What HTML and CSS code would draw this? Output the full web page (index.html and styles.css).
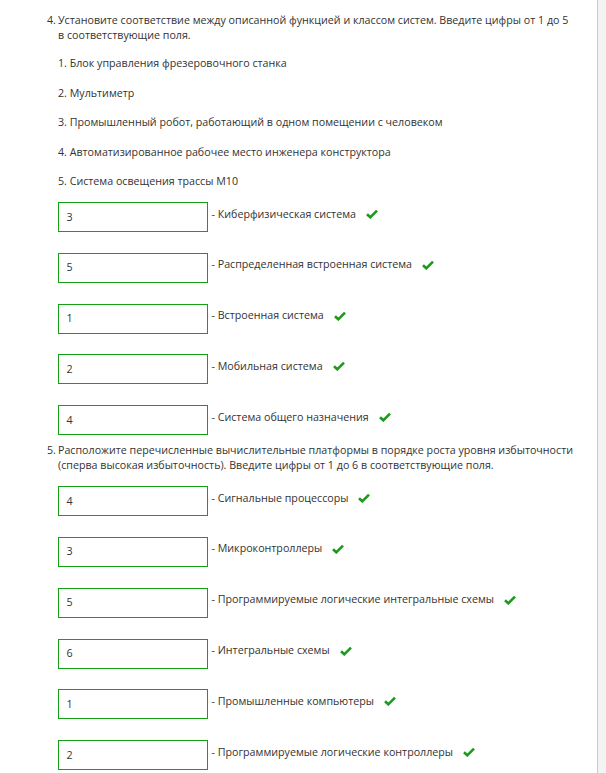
FILE: index.html
```html
<!DOCTYPE html>
<html lang="ru">
<head>
<meta charset="utf-8">
<link rel="stylesheet" href="styles.css">
</head>
<body>
<div class="page">
  <section class="q q4">
    <div class="q-title"><span class="num">4.</span><span class="txt">Установите соответствие между описанной функцией и классом систем. Введите цифры от 1 до 5 в соответствующие поля.</span></div>
    <div class="items">
      <p>1. Блок управления фрезеровочного станка</p>
      <p>2. Мультиметр</p>
      <p>3. Промышленный робот, работающий в одном помещении с человеком</p>
      <p>4. Автоматизированное рабочее место инженера конструктора</p>
      <p>5. Система освещения трассы М10</p>
    </div>
    <div class="rows">
      <div class="row"><div class="box">3</div><span class="label">- Киберфизическая система</span><svg class="ok" viewBox="0 0 12 10"><path d="M1 5.2 L4.3 8.3 L11 1.6" /></svg></div>
      <div class="row"><div class="box">5</div><span class="label">- Распределенная встроенная система</span><svg class="ok" viewBox="0 0 12 10"><path d="M1 5.2 L4.3 8.3 L11 1.6" /></svg></div>
      <div class="row"><div class="box">1</div><span class="label">- Встроенная система</span><svg class="ok" viewBox="0 0 12 10"><path d="M1 5.2 L4.3 8.3 L11 1.6" /></svg></div>
      <div class="row"><div class="box">2</div><span class="label">- Мобильная система</span><svg class="ok" viewBox="0 0 12 10"><path d="M1 5.2 L4.3 8.3 L11 1.6" /></svg></div>
      <div class="row"><div class="box">4</div><span class="label">- Система общего назначения</span><svg class="ok" viewBox="0 0 12 10"><path d="M1 5.2 L4.3 8.3 L11 1.6" /></svg></div>
    </div>
  </section>
  <section class="q q5">
    <div class="q-title"><span class="num">5.</span><span class="txt">Расположите перечисленные вычислительные платформы в порядке роста уровня избыточности (сперва высокая избыточность). Введите цифры от 1 до 6 в соответствующие поля.</span></div>
    <div class="rows">
      <div class="row"><div class="box">4</div><span class="label">- Сигнальные процессоры</span><svg class="ok" viewBox="0 0 12 10"><path d="M1 5.2 L4.3 8.3 L11 1.6" /></svg></div>
      <div class="row"><div class="box">3</div><span class="label">- Микроконтроллеры</span><svg class="ok" viewBox="0 0 12 10"><path d="M1 5.2 L4.3 8.3 L11 1.6" /></svg></div>
      <div class="row"><div class="box">5</div><span class="label">- Программируемые логические интегральные схемы</span><svg class="ok" viewBox="0 0 12 10"><path d="M1 5.2 L4.3 8.3 L11 1.6" /></svg></div>
      <div class="row"><div class="box">6</div><span class="label">- Интегральные схемы</span><svg class="ok" viewBox="0 0 12 10"><path d="M1 5.2 L4.3 8.3 L11 1.6" /></svg></div>
      <div class="row"><div class="box">1</div><span class="label">- Промышленные компьютеры</span><svg class="ok" viewBox="0 0 12 10"><path d="M1 5.2 L4.3 8.3 L11 1.6" /></svg></div>
      <div class="row"><div class="box">2</div><span class="label">- Программируемые логические контроллеры</span><svg class="ok" viewBox="0 0 12 10"><path d="M1 5.2 L4.3 8.3 L11 1.6" /></svg></div>
    </div>
  </section>
</div>
</body>
</html>
```
FILE: styles.css
```css
html, body {
  margin: 0;
  padding: 0;
}
body {
  background: #f3f3f3;
  font-family: "Open Sans", "Liberation Sans", sans-serif;
  font-size: 10.7px;
  line-height: 15px;
  color: #333;
}
.page {
  width: 598px;
  min-height: 773px;
  background: #fff;
  border-right: 1px solid #c9c9c9;
  box-sizing: border-box;
  padding: 13px 0 0 47px;
}
.q-title {
  display: flex;
  padding-right: 23px;
}
.q-title .num {
  flex: none;
  width: 11px;
}
.items {
  padding: 13px 0 0 11px;
}
.items p {
  margin: 0 0 14.5px 0;
}
.items p:last-child {
  margin-bottom: 0;
}
.rows {
  display: flex;
  flex-direction: column;
  gap: 20.8px;
  padding: 13px 0 0 11px;
}
.row {
  display: flex;
  align-items: flex-start;
}
.box {
  flex: none;
  width: 150px;
  height: 30px;
  box-sizing: border-box;
  border: 1.5px solid #14a014;
  padding: 6.5px 0 0 7.5px;
  color: #333;
}
.label {
  padding: 4.5px 0 0 3.5px;
}
.ok {
  width: 12px;
  height: 10px;
  margin: 7px 0 0 10px;
  fill: none;
  stroke: #1c9a1c;
  stroke-width: 2.6;
  stroke-linecap: butt;
  stroke-linejoin: miter;
}
.q5 {
  padding-top: 8px;
}
```
